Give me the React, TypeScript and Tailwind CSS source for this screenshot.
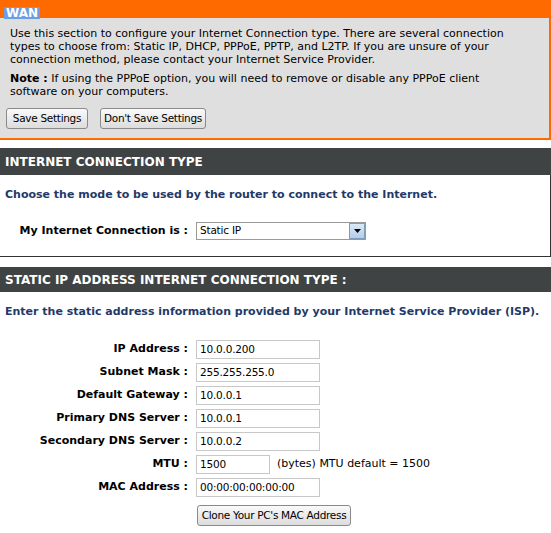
const fields = [
  { label: 'IP Address :', value: '10.0.0.200' },
  { label: 'Subnet Mask :', value: '255.255.255.0' },
  { label: 'Default Gateway :', value: '10.0.0.1' },
  { label: 'Primary DNS Server :', value: '10.0.0.1' },
  { label: 'Secondary DNS Server :', value: '10.0.0.2' },
]

function Btn({ children, className = '' }: { children: React.ReactNode; className?: string }) {
  return (
    <button className={`h-[21px] whitespace-nowrap rounded-[3px] border border-[#8a8a8a] bg-gradient-to-b from-[#fafafa] to-[#dcdcdc] text-[10.5px] leading-none tracking-[-0.3px] text-black ${className}`}>
      {children}
    </button>
  )
}

function Field({ value, w = 'w-[124px]' }: { value: string; w?: string }) {
  return (
    <div className={`flex h-[19px] ${w} items-center border border-[#c8c8c8] bg-white px-[3px] text-[10.5px] tracking-[-0.2px] text-black`}>
      {value}
    </div>
  )
}

export default function App() {
  return (
    <div className="h-[533px] w-[551px] overflow-hidden bg-white font-['DejaVu_Sans',sans-serif] text-black">
      <section className="border-r-2 border-b-2 border-[#ff6a00]">
        <div className="h-[18px] bg-[#ff6a00] pl-[4px]">
          <span className="inline-block h-[12px] bg-[#6d9de2] px-[2px] text-[12px] font-bold leading-[12px] text-white">WAN</span>
        </div>
        <div className="bg-[#dfdfdf] pl-[10px] pr-[30px] pb-[9px] pt-[9px] text-[11px] leading-[13px]">
          <p>
            Use this section to configure your Internet Connection type. There are several connection types to choose from: Static IP, DHCP, PPPoE, PPTP, and L2TP. If you are unsure of your connection method, please contact your Internet Service Provider.
          </p>
          <p className="mt-[6px]">
            <b>Note :</b> If using the PPPoE option, you will need to remove or disable any PPPoE client software on your computers.
          </p>
          <div className="-ml-[4px] mt-[10px] flex gap-[12px]">
            <Btn className="w-[82px]">Save Settings</Btn>
            <Btn className="w-[106px]">Don't Save Settings</Btn>
          </div>
        </div>
      </section>

      <section className="mt-[8px]">
        <h2 className="flex h-[27px] items-center bg-[#404343] px-[5px] text-[12px] font-bold text-white">INTERNET CONNECTION TYPE</h2>
        <div className="h-[82px] border-r border-b border-[#333] px-[5px]">
          <p className="pt-[13px] text-[11px] font-bold leading-[13px] text-[#1f3a6a]">Choose the mode to be used by the router to connect to the Internet.</p>
          <div className="mt-[21px] flex items-center">
            <span className="w-[183px] text-right text-[11px] font-bold">My Internet Connection is :</span>
            <div className="ml-[8px] flex h-[18px] w-[170px] items-center justify-between border border-[#9a9a9a] bg-white pl-[3px] text-[10.5px] tracking-[-0.2px]">
              <span>Static IP</span>
              <span className="flex h-[16px] w-[16px] items-center justify-center border border-[#7f9db9] bg-gradient-to-b from-[#dbe9f8] to-[#b3cde8]">
                <svg width="7" height="4" viewBox="0 0 7 4"><path d="M0 0h7L3.5 4z" fill="#000" /></svg>
              </span>
            </div>
          </div>
        </div>
      </section>

      <section className="mt-[10px]">
        <h2 className="flex h-[25px] items-center bg-[#404343] px-[5px] text-[12px] font-bold text-white">STATIC IP ADDRESS INTERNET CONNECTION TYPE :</h2>
        <p className="px-[5px] pt-[13px] text-[11px] font-bold leading-[13px] text-[#1f3a6a]">Enter the static address information provided by your Internet Service Provider (ISP).</p>
        <div className="mt-[22px] flex flex-col gap-[4px]">
          {fields.map((f) => (
            <div key={f.label} className="flex items-center">
              <span className="w-[188px] text-right text-[11px] font-bold">{f.label}</span>
              <span className="ml-[8px]"><Field value={f.value} /></span>
            </div>
          ))}
          <div className="flex items-center">
            <span className="w-[188px] text-right text-[11px] font-bold">MTU :</span>
            <span className="ml-[8px]"><Field value="1500" w="w-[74px]" /></span>
            <span className="ml-[7px] text-[11px]">(bytes) MTU default = 1500</span>
          </div>
          <div className="flex items-center">
            <span className="w-[188px] text-right text-[11px] font-bold">MAC Address :</span>
            <span className="ml-[8px]"><Field value="00:00:00:00:00:00" /></span>
          </div>
          <div className="ml-[197px] mt-[1px]">
            <Btn className="w-[154px]">Clone Your PC's MAC Address</Btn>
          </div>
        </div>
      </section>
    </div>
  )
}
